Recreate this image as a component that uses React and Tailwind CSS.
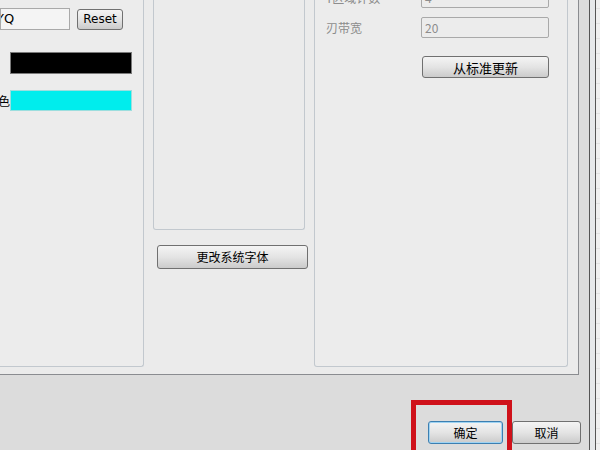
const font = { fontFamily: '"Noto Sans CJK SC", "DejaVu Sans", sans-serif' }

const Btn = ({ className, children, focused }) => (
    <div
        className={`flex items-center justify-center rounded-[3px] border text-[12px] leading-none text-black bg-gradient-to-b from-[#f4f4f4] via-[#e4e4e4] to-[#cbcbcb] ${focused ? 'border-[#3c7fb1] shadow-[inset_0_0_0_1px_#9fd3f2]' : 'border-[#707070]'} ${className}`}
    >{children}</div>
)

const App = () => {
    return (
        <div className="relative flex w-[600px] h-[450px] overflow-hidden bg-[#f0f0f0]" style={font}>
            <div className="flex flex-col w-[590px] h-full bg-[#dcdcdc] border-r border-[#555]">
                {/* tab page */}
                <div className="flex w-[579px] h-[375px] bg-[#ebebeb] border-r border-b border-[#8a8c90]">
                    {/* left group */}
                    <div className="relative w-[144px] h-[367px] border-r border-b border-[#c2c8ce] rounded-br-[3px] bg-[#ececec] shrink-0">
                        <div className="flex items-center gap-[7px] pt-[8px]">
                            <div className="w-[70px] h-[22px] border border-[#a9a9a9] bg-[#f4f4f4] flex items-center overflow-hidden">
                                <span className="ml-[-5px] text-[13px] text-black" style={{ fontFamily: '"DejaVu Sans", sans-serif' }}>YQ</span>
                            </div>
                            <Btn className="w-[46px] h-[21px]"><span style={{ fontFamily: '"DejaVu Sans", sans-serif' }}>Reset</span></Btn>
                        </div>
                        <div className="ml-[10px] mt-[22px] w-[122px] h-[22px] bg-black border border-[#7a7a7a]" />
                        <div className="flex items-center mt-[16px] ml-[-2px]">
                            <span className="w-[12px] text-[12px] leading-none text-black">色</span>
                            <div className="w-[122px] h-[21px] bg-[#00eded] border border-[#9cdede]" />
                        </div>
                    </div>
                    {/* middle column */}
                    <div className="flex flex-col w-[170px] shrink-0">
                        <div className="ml-[9px] w-[152px] h-[230px] border-x border-b border-[#c2c8ce] rounded-b-[3px] bg-[#ebebeb]" />
                        <Btn className="ml-[13px] mt-[15px] w-[151px] h-[24px]">更改系统字体</Btn>
                    </div>
                    {/* right group */}
                    <div className="w-[254px] h-[367px] border-x border-b border-[#c2c8ce] rounded-b-[3px] bg-[#ececec] shrink-0">
                        <div className="grid grid-cols-[95px_128px] gap-y-[9px] mt-[-13px] pl-[11px] text-[12px] text-[#8d8d8d]">
                            <span className="flex items-center h-[21px]">Y区域计数</span>
                            <div className="flex items-center h-[21px] pl-[3px] border border-[#a9a9a9] rounded-[2px]">4</div>
                            <span className="flex items-center h-[21px]">刃带宽</span>
                            <div className="flex items-center h-[21px] pl-[3px] border border-[#a9a9a9] rounded-[2px]">20</div>
                        </div>
                        <Btn className="ml-[107px] mt-[18px] w-[127px] h-[22px] text-[13px]">从标准更新</Btn>
                    </div>
                </div>
                {/* bottom buttons */}
                <div className="flex pt-[46px] pl-[428px] gap-[9px]">
                    <Btn focused className="w-[75px] h-[23px] shrink-0">确定</Btn>
                    <Btn className="w-[69px] h-[23px] shrink-0">取消</Btn>
                </div>
            </div>
            {/* window edge */}
            <div className="w-[6px] h-full bg-[#e6e8ea] border-r border-[#555] shrink-0" />
            <div className="flex-1 h-full bg-[#f0f0f0] flex flex-col gap-[14px] pt-[8px]">
                {Array.from({ length: 30 }).map((_, i) => (
                    <div key={i} className="h-px bg-[#e2e2e2]" />
                ))}
            </div>
            {/* annotation */}
            <div className="absolute left-[411px] top-[400px] w-[101px] h-[60px] border-[5px] border-[#cf111a]" />
        </div>
    )
}

export default App
